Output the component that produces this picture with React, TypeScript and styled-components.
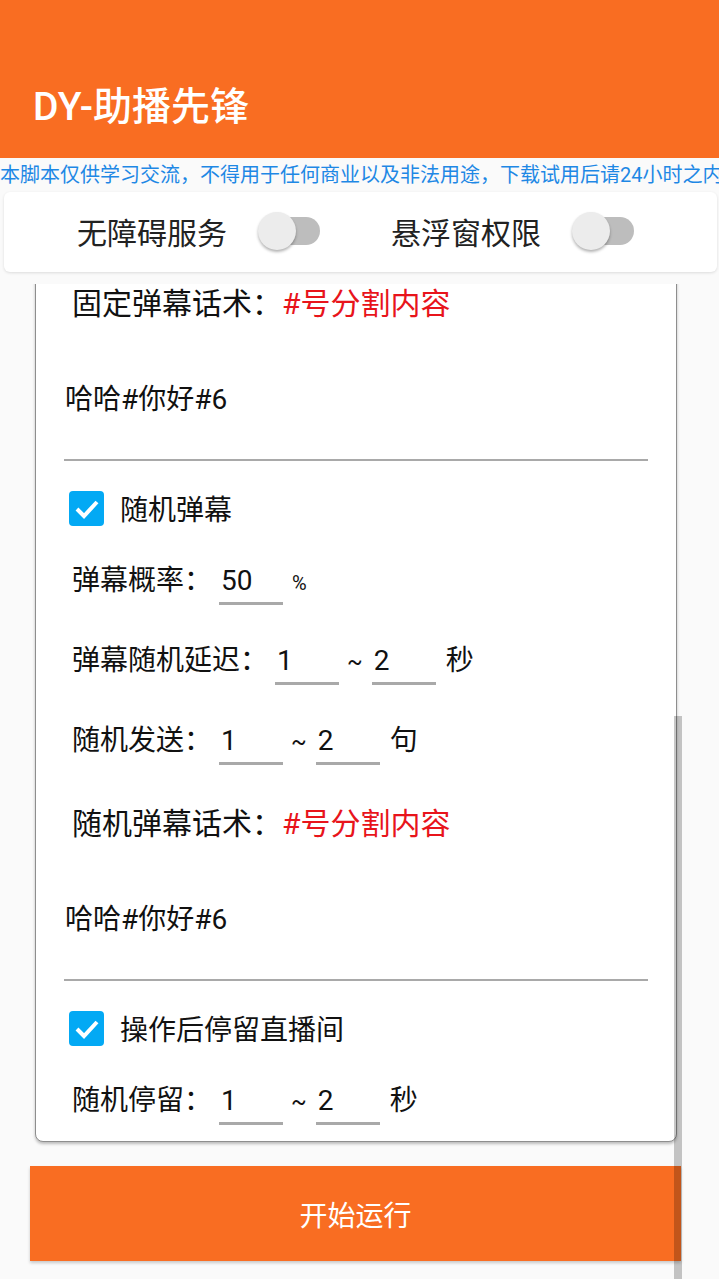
import styled, { createGlobalStyle } from "styled-components";

const GlobalStyle = createGlobalStyle`
  body {
    margin: 0;
    background: #fafafa;
    font-family: Roboto, "Noto Sans CJK SC", sans-serif;
  }
`;

const SPage = styled.div`
  position: relative;
  min-height: 1279px;
  overflow: hidden;
  background: #fafafa;
`;
const SHeader = styled.header`
  height: 158px;
  box-sizing: border-box;
  padding: 48px 0 0 33px;
  background: #f96d22;
  display: flex;
  align-items: center;
`;
const STitle = styled.h1`
  margin: 0;
  font-size: 39px;
  font-weight: 500;
  color: #ffffff;
`;
const SNotice = styled.div`
  height: 34px;
  line-height: 34px;
  font-size: 20px;
  color: #1e88e5;
  white-space: nowrap;
  overflow: hidden;
`;
const SToggleCard = styled.div`
  margin: 0 2px 0 4px;
  height: 80px;
  box-sizing: border-box;
  padding: 0 0 3px 73px;
  background: #ffffff;
  border-radius: 6px;
  box-shadow: 0 1px 3px rgba(0, 0, 0, 0.12);
  display: flex;
  align-items: center;
  gap: 71px;
`;
const SToggleItem = styled.div`
  display: flex;
  align-items: center;
  gap: 31px;
`;
const SToggleLabel = styled.span`
  font-size: 30px;
  color: #222;
`;
const SSwitch = styled.span`
  position: relative;
  width: 62px;
  height: 40px;
`;
const STrack = styled.span`
  position: absolute;
  left: 4px;
  right: 0;
  top: 6px;
  height: 28px;
  border-radius: 14px;
  background: #bdbdbd;
`;
const SThumb = styled.span`
  position: absolute;
  left: 0;
  top: 1px;
  width: 38px;
  height: 38px;
  border-radius: 50%;
  background: #ececec;
  box-shadow: 0 2px 3px rgba(0, 0, 0, 0.3);
`;
const SViewport = styled.div`
  margin-top: 12px;
  padding-bottom: 7px;
  overflow: hidden;
`;
const SCard = styled.div`
  margin: -24px 42px 0 35px;
  background: #ffffff;
  border: 1.5px solid #8e8e8e;
  border-radius: 8px;
  box-shadow: 0 2px 3px rgba(0, 0, 0, 0.25);
`;
const SHeadingRow = styled.div`
  height: 80px;
  display: flex;
  align-items: center;
  padding-left: 36px;
  font-size: 30px;
  color: #111;
`;
const SHint = styled.span`
  color: #e8141b;
`;
const SEditText = styled.div`
  margin: 0 28px;
  padding: 42px 1px 42px;
  line-height: 34px;
  font-size: 28px;
  color: #111;
  border-bottom: 2px solid #a9a9a9;
`;
const SCheckRow = styled.div`
  height: 80px;
  box-sizing: border-box;
  padding: 14px 0 0 33px;
  display: flex;
  align-items: center;
  gap: 16px;
  font-size: 28px;
  color: #111;
`;
const SCheckBox = styled.span`
  width: 35px;
  height: 35px;
  border-radius: 4px;
  background: #03a9f4;
  display: flex;
`;
const SFieldRow = styled.div`
  height: 80px;
  box-sizing: border-box;
  padding: 23px 0 0 36px;
  display: flex;
  align-items: baseline;
  font-size: 28px;
  line-height: 34px;
  color: #111;
`;
const SLabel = styled.span`
  margin-right: 7px;
`;
const SField = styled.span`
  width: 64px;
  box-sizing: border-box;
  padding: 0 0 4px 2px;
  border-bottom: 3px solid #a9a9a9;
`;
const SSmall = styled.span<{ $left: number; $right: number; $size: number }>`
  font-size: ${({ $size }) => $size}px;
  margin: 0 ${({ $right }) => $right}px 0 ${({ $left }) => $left}px;
`;
const SUnit = styled.span`
  margin-left: 10px;
`;
const SStartButton = styled.button`
  display: flex;
  align-items: center;
  justify-content: center;
  width: 651px;
  height: 95px;
  margin: 17px 0 0 30px;
  border: none;
  background: #f96d22;
  color: #ffffff;
  font-family: Roboto, "Noto Sans CJK SC", sans-serif;
  font-size: 28px;
  box-shadow: 0 2px 3px rgba(0, 0, 0, 0.2);
`;
const SScrollBar = styled.div`
  position: absolute;
  left: 674px;
  top: 716px;
  bottom: 0;
  width: 8px;
  background: rgba(0, 0, 0, 0.22);
`;

function Toggle({ label }: { label: string }) {
  return (
    <SToggleItem>
      <SToggleLabel>{label}</SToggleLabel>
      <SSwitch>
        <STrack />
        <SThumb />
      </SSwitch>
    </SToggleItem>
  );
}

function Check({ label }: { label: string }) {
  return (
    <SCheckRow>
      <SCheckBox>
        <svg width="35" height="35" viewBox="0 0 35 35">
          <path
            d="M8 18 L15 25 L28 11"
            fill="none"
            stroke="#ffffff"
            strokeWidth="4"
          />
        </svg>
      </SCheckBox>
      <span>{label}</span>
    </SCheckRow>
  );
}

function RangeRow({ label, unit }: { label: string; unit: string }) {
  return (
    <SFieldRow>
      <SLabel>{label}</SLabel>
      <SField>1</SField>
      <SSmall $left={8} $right={9} $size={23}>~</SSmall>
      <SField>2</SField>
      <SUnit>{unit}</SUnit>
    </SFieldRow>
  );
}

export default function App() {
  return (
    <SPage>
      <GlobalStyle />
      <SHeader>
        <STitle>DY-助播先锋</STitle>
      </SHeader>
      <SNotice>
        本脚本仅供学习交流，不得用于任何商业以及非法用途，下载试用后请24小时之内删除
      </SNotice>
      <SToggleCard>
        <Toggle label="无障碍服务" />
        <Toggle label="悬浮窗权限" />
      </SToggleCard>
      <SViewport>
        <SCard>
          <SHeadingRow>
            固定弹幕话术：<SHint>#号分割内容</SHint>
          </SHeadingRow>
          <SEditText>哈哈#你好#6</SEditText>
          <Check label="随机弹幕" />
          <SFieldRow>
            <SLabel>弹幕概率：</SLabel>
            <SField>50</SField>
            <SSmall $left={9} $right={0} $size={20}>%</SSmall>
          </SFieldRow>
          <RangeRow label="弹幕随机延迟：" unit="秒" />
          <RangeRow label="随机发送：" unit="句" />
          <SHeadingRow>
            随机弹幕话术：<SHint>#号分割内容</SHint>
          </SHeadingRow>
          <SEditText>哈哈#你好#6</SEditText>
          <Check label="操作后停留直播间" />
          <RangeRow label="随机停留：" unit="秒" />
        </SCard>
      </SViewport>
      <SStartButton>开始运行</SStartButton>
      <SScrollBar />
    </SPage>
  );
}
